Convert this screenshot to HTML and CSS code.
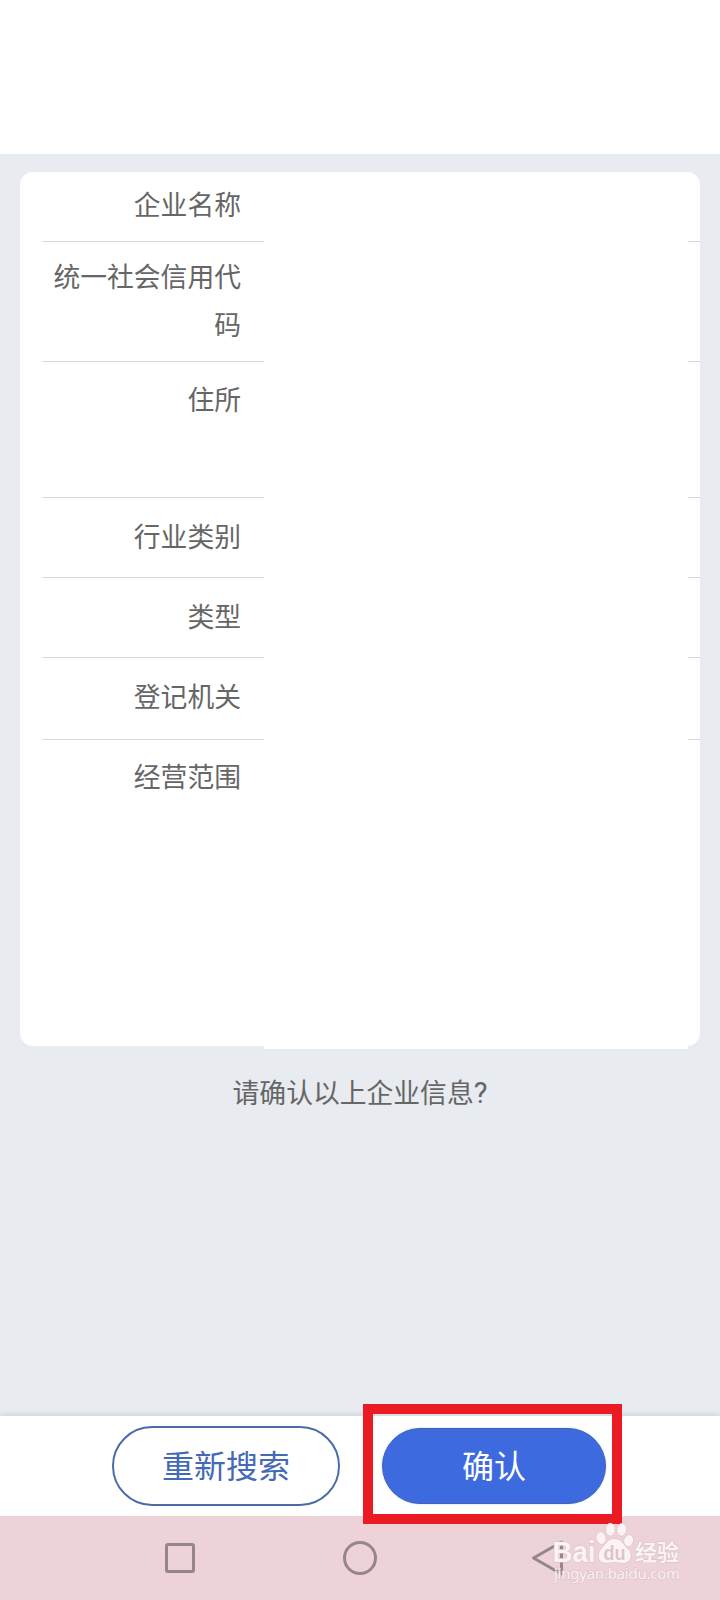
FILE: index.html
```html
<!DOCTYPE html>
<html lang="zh-CN">
<head>
    <meta charset="UTF-8">
    <meta name="viewport" content="width=device-width, initial-scale=1">
    <title>企业信息确认</title>
    <link rel="stylesheet" href="styles.css">
</head>
<body>
    <header class="top-bar"></header>

    <main class="content">
        <div class="info-card">
            <div class="info-row row-name">
                <div class="label">企业名称</div>
                <div class="value"></div>
                <div class="row-end"></div>
            </div>
            <div class="info-row row-code">
                <div class="label">统一社会信用代码</div>
                <div class="value"></div>
                <div class="row-end"></div>
            </div>
            <div class="info-row row-address">
                <div class="label">住所</div>
                <div class="value"></div>
                <div class="row-end"></div>
            </div>
            <div class="info-row">
                <div class="label">行业类别</div>
                <div class="value"></div>
                <div class="row-end"></div>
            </div>
            <div class="info-row">
                <div class="label">类型</div>
                <div class="value"></div>
                <div class="row-end"></div>
            </div>
            <div class="info-row row-office">
                <div class="label">登记机关</div>
                <div class="value"></div>
                <div class="row-end"></div>
            </div>
            <div class="info-row row-scope">
                <div class="label">经营范围</div>
                <div class="value"></div>
                <div class="row-end"></div>
            </div>
        </div>
        <p class="question">请确认以上企业信息<span class="mark">?</span></p>
    </main>

    <footer class="actions">
        <button type="button" class="btn btn-outline">重新搜索</button>
        <div class="confirm-wrap">
            <button type="button" class="btn btn-primary">确认</button>
            <div class="highlight"></div>
        </div>
    </footer>

    <nav class="system-nav">
        <svg class="nav-icons" width="720" height="84" viewBox="0 0 720 84" fill="none" stroke="#958787" stroke-width="3">
            <rect x="166.5" y="28.5" width="27" height="27" rx="1.5"/>
            <circle cx="360" cy="42" r="15.5"/>
            <path d="M533.5 42 L561.5 26 V58 Z" stroke-linejoin="round"/>
        </svg>
        <svg class="watermark" width="150" height="70" viewBox="545 1520 150 70">
            <g class="wm-shape">
                <ellipse cx="601" cy="1538" rx="4.5" ry="6" transform="rotate(-15 601 1538)"/>
                <ellipse cx="610.3" cy="1529.5" rx="4.5" ry="6.2"/>
                <ellipse cx="621.7" cy="1529.7" rx="4.5" ry="6.2" transform="rotate(8 621.7 1529.7)"/>
                <ellipse cx="628.7" cy="1540.7" rx="4.5" ry="5.7" transform="rotate(15 628.7 1540.7)"/>
                <path d="M614.5 1539 C621 1539 623 1544 627 1548 C634 1554 631 1563 623 1563 C619 1563 618 1562 614.5 1562 C611 1562 610 1563 606 1563 C598 1563 596 1554 602 1548 C606 1544 608 1539 614.5 1539 Z"/>
            </g>
            <text class="wm-logo" x="552.5" y="1562" textLength="43" lengthAdjust="spacingAndGlyphs">Bai</text>
            <text class="wm-du" x="603.5" y="1560" textLength="22" lengthAdjust="spacingAndGlyphs">du</text>
            <text class="wm-cn" x="635" y="1560" textLength="44">经验</text>
            <text class="wm-url" x="554" y="1579" textLength="126">jingyan.baidu.com</text>
        </svg>
    </nav>
</body>
</html>
```
FILE: styles.css
```css
:root {
    --page: #e8ebf0;
    --line: #d6d8da;
    --text: #666;
    --blue: #3d6adf;
    --red: #ea1b23;
}

* {
    box-sizing: border-box;
    margin: 0;
    padding: 0;
}

body {
    width: 720px;
    height: 1600px;
    display: flex;
    flex-direction: column;
    background: var(--page);
    color: var(--text);
    font-family: "Noto Sans CJK SC", sans-serif;
    overflow: hidden;
}

.top-bar {
    height: 154px;
    background: #fff;
}

.content {
    flex: 1;
    padding: 18px 20px 0;
}

/* company info */
.info-card {
    height: 874px;
    padding-left: 22px;
    display: flex;
    flex-direction: column;
    background: #fff;
    border-radius: 13px;
}

.info-row {
    height: 80px;
    display: grid;
    grid-template-columns: 222px 1fr 12px;
}

.label {
    padding: 14px 23px 0 6px;
    border-bottom: 1px solid var(--line);
    font-size: 26.8px;
    line-height: 48px;
    text-align: right;
}

.row-end {
    border-bottom: 1px solid var(--line);
}

.row-name {
    height: 70px;
}

.row-name .label {
    padding-top: 8px;
}

.row-code {
    height: 120px;
}

.row-code .label {
    padding-top: 10px;
}

.row-address {
    height: 136px;
}

.row-address .label {
    padding-top: 13px;
}

.row-office {
    height: 82px;
}

.row-scope {
    flex: 1;
}

.row-scope .label {
    padding-top: 12px;
}

.row-scope .label,
.row-scope .row-end {
    border-bottom: none;
}

.row-scope .value {
    margin-bottom: -3px;
    background: #fff;
}

.question {
    margin-top: 22px;
    font-size: 26.8px;
    line-height: 48px;
    text-align: center;
}

.question .mark {
    font-family: Roboto, sans-serif;
    font-size: 29px;
}

/* bottom buttons */
.actions {
    height: 100px;
    padding-left: 112px;
    display: flex;
    align-items: center;
    gap: 42px;
    background: #fff;
    box-shadow: 0 -1px 6px rgba(0, 0, 0, 0.13);
}

.btn {
    padding-bottom: 5px;
    border-radius: 40px;
    font-family: inherit;
    font-size: 32px;
    line-height: 46px;
}

.btn-outline {
    width: 228px;
    height: 80px;
    background: #fff;
    border: 2px solid #4a6ba8;
    color: #4469b5;
}

.confirm-wrap {
    position: relative;
}

.btn-primary {
    display: block;
    width: 224px;
    height: 76px;
    background: var(--blue);
    border: 1px solid #4560b4;
    box-shadow: 0 0 2px #b5d2f5;
    color: #fff;
}

.highlight {
    position: absolute;
    left: -19px;
    top: -24px;
    width: 259px;
    height: 120px;
    border: 10px solid var(--red);
    z-index: 1;
}

/* android navigation */
.system-nav {
    position: relative;
    height: 84px;
    background: #edd3d8;
}

.nav-icons {
    display: block;
}

.watermark {
    position: absolute;
    left: 545px;
    top: 4px;
    z-index: 2;
    fill: #fbf3f4;
    stroke: #d9bcc1;
    stroke-width: 1;
    paint-order: stroke;
}

.wm-logo {
    font: bold 29px "Liberation Sans", sans-serif;
}

.wm-du {
    font: bold 20px "Liberation Sans", sans-serif;
    fill: #e0c4c9;
    stroke: none;
}

.wm-cn {
    font: bold 22px "Noto Sans CJK SC", sans-serif;
}

.wm-url {
    font: 15px "Noto Sans", sans-serif;
}
```
